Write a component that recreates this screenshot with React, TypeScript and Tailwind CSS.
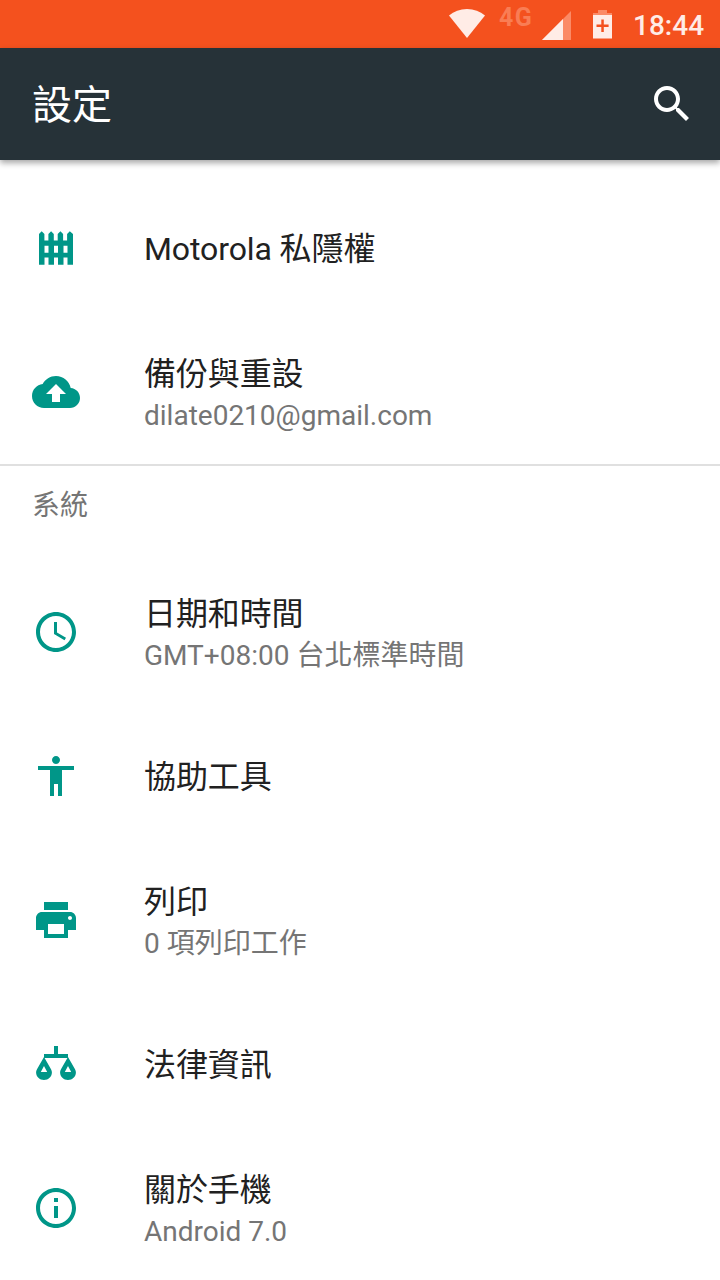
import React from "react";

type SettingItem = {
  title: string;
  summary?: string;
  icon: React.ReactNode;
};

// Iconos de la lista (rejilla de 24, dibujados a 48px)
const FenceIcon = () => (
  <svg viewBox="0 0 48 48" className="w-12 h-12" fill="currentColor">
    <path d="M7 10l2.700-2.700 2.700 2.700v6.500h4V10l2.700-2.700 2.700 2.700v6.500h3.900V10l2.700-2.700 2.700 2.700v6.500h4V10l2.700-2.700L41 10v30.700h-5.500v-7.200h-4v7.200H26v-7.200h-4v7.200h-5.500v-7.200h-4v7.200H7zM12.500 21.800v6.900h4v-6.900zM22 21.800v6.900h4v-6.900zM31.500 21.800v6.900h4v-6.900z" fillRule="evenodd" />
  </svg>
);

const BackupIcon = () => (
  <svg viewBox="0 0 24 24" className="w-12 h-12" fill="currentColor">
    <path d="M19.35 10.04C18.67 6.59 15.64 4 12 4 9.11 4 6.6 5.64 5.35 8.04 2.34 8.36 0 10.91 0 14c0 3.31 2.69 6 6 6h13c2.76 0 5-2.24 5-5 0-2.64-2.05-4.78-4.65-4.96zM14 13v4h-4v-4H7l5-5 5 5h-3z" />
  </svg>
);

const ClockIcon = () => (
  <svg viewBox="0 0 24 24" className="w-12 h-12" fill="currentColor">
    <path d="M11.99 2C6.47 2 2 6.48 2 12s4.47 10 9.99 10C17.52 22 22 17.52 22 12S17.52 2 11.99 2zM12 20c-4.42 0-8-3.58-8-8s3.58-8 8-8 8 3.58 8 8-3.58 8-8 8zm.5-13H11v6l5.25 3.15.75-1.23-4.5-2.67z" />
  </svg>
);

const AccessibilityIcon = () => (
  <svg viewBox="0 0 24 24" className="w-12 h-12" fill="currentColor">
    <path d="M12 2c1.1 0 2 .9 2 2s-.9 2-2 2-2-.9-2-2 .9-2 2-2zm9 7h-6v13h-2v-6h-2v6H9V9H3V7h18v2z" />
  </svg>
);

const PrintIcon = () => (
  <svg viewBox="0 0 24 24" className="w-12 h-12" fill="currentColor">
    <path d="M19 8H5c-1.66 0-3 1.34-3 3v6h4v4h12v-4h4v-6c0-1.66-1.34-3-3-3zm-3 11H8v-5h8v5zm3-7c-.55 0-1-.45-1-1s.45-1 1-1 1 .45 1 1-.45 1-1 1zm-1-9H6v4h12V3z" />
  </svg>
);

const LegalIcon = () => (
  <svg viewBox="0 0 48 48" className="w-12 h-12" fill="currentColor">
    <path d="M22 6h4v8h10v4H12v-4h10z" />
    <path d="M12 17l6.600 11.400c1 1.700 1.300 2.900 1.300 4.100 0 4.200-3.500 7.500-7.900 7.500s-7.900-3.300-7.900-7.500c0-1.200.3-2.400 1.300-4.100zM12 26l-3.200 6h6.400zM36 17l6.600 11.400c1 1.700 1.300 2.900 1.300 4.100 0 4.200-3.500 7.500-7.900 7.500s-7.900-3.300-7.900-7.500c0-1.200.3-2.400 1.300-4.100zM36 26l-3.200 6h6.400z" fillRule="evenodd" />
  </svg>
);

const InfoIcon = () => (
  <svg viewBox="0 0 24 24" className="w-12 h-12" fill="currentColor">
    <path d="M11 17h2v-6h-2v6zm1-15C6.480 2 2 6.480 2 12s4.480 10 10 10 10-4.480 10-10S17.520 2 12 2zm0 18c-4.410 0-8-3.590-8-8s3.590-8 8-8 8 3.590 8 8-3.590 8-8 8zM11 9h2V7h-2v2z" />
  </svg>
);

const personalItems: SettingItem[] = [
  { title: "Motorola 私隱權", icon: <FenceIcon /> },
  { title: "備份與重設", summary: "dilate0210@gmail.com", icon: <BackupIcon /> },
];

const systemItems: SettingItem[] = [
  { title: "日期和時間", summary: "GMT+08:00 台北標準時間", icon: <ClockIcon /> },
  { title: "協助工具", icon: <AccessibilityIcon /> },
  { title: "列印", summary: "0 項列印工作", icon: <PrintIcon /> },
  { title: "法律資訊", icon: <LegalIcon /> },
  { title: "關於手機", summary: "Android 7.0", icon: <InfoIcon /> },
];

const StatusBar = () => (
  <div className="h-12 bg-[#f4511e] flex items-start text-[#ffece6]">
    <svg viewBox="0 0 36 30" className="w-9 h-[30px] ml-[449px] mt-[9px]" fill="currentColor">
      <path d="M0 6.500C5 2.300 11 0 18 0s13 2.300 18 6.500L18 29z" />
    </svg>
    <span className="ml-[14px] mt-[4px] w-[38px] text-[25px] leading-[28px] font-bold tracking-[1.5px] text-[#f97d54]">4G</span>
    <svg viewBox="0 0 30 30" className="w-[30px] h-[30px] ml-[5px] mt-[10px]">
      <path d="M29 1v29H0z" fill="#fb8a66" />
      <path d="M21 9v21H0z" fill="currentColor" />
    </svg>
    <svg viewBox="0 0 20 30" className="w-5 h-[30px] ml-[21px] mt-[9px]">
      <path d="M5 1h9v3h5v3H0V4h5z" fill="#fb8a66" />
      <path d="M0 6h19v23.500H0zM8.300 10.500v5H3.500v2.500h4.800v5h2.500v-5h4.800v-2.500h-4.800v-5z" fill="currentColor" fillRule="evenodd" />
    </svg>
    <span className="ml-[20px] mt-[9px] text-[28px] leading-[34px] font-medium">18:44</span>
  </div>
);

const Row: React.FC<{ item: SettingItem }> = ({ item }) => (
  <div className="h-36 flex items-center px-8">
    <div className="w-12 shrink-0 text-[#009688]">{item.icon}</div>
    <div className="ml-16 pt-[2px]">
      <div className="text-[32px] leading-[44px] tracking-[-0.1px] text-[#212121]">{item.title}</div>
      {item.summary && (
        <div className="mt-px text-[28px] leading-[38px] text-[#757575]">{item.summary}</div>
      )}
    </div>
  </div>
);

const App: React.FC = () => {
  return (
    <div className="w-[720px] h-[1280px] overflow-hidden bg-white whitespace-nowrap font-[Roboto,'Noto_Sans_CJK_TC',sans-serif]">
      <StatusBar />

      <header className="relative h-28 px-8 bg-[#263238] flex items-center justify-between shadow-[0_3px_6px_rgba(0,0,0,0.35)]">
        <h1 className="pt-1 text-[40px] leading-[56px] text-white">設定</h1>
        <svg viewBox="0 0 24 24" className="w-12 h-12 -mr-2" fill="white">
          <path d="M15.500 14h-.79l-.28-.27C15.410 12.590 16 11.110 16 9.500 16 5.910 13.090 3 9.500 3S3 5.910 3 9.500 5.910 16 9.500 16c1.610 0 3.090-.59 4.230-1.570l.27.28v.79l5 4.990L20.490 19l-4.990-5zm-6 0C7.010 14 5 11.990 5 9.500S7.010 5 9.500 5 14 7.010 14 9.500 11.990 14 9.500 14z" />
        </svg>
      </header>

      <main className="pt-4">
        {personalItems.map((item) => (
          <Row key={item.title} item={item} />
        ))}

        {/* Sección del sistema */}
        <div className="h-24 border-t-2 border-[#e0e0e0] px-8 pt-[20px]">
          <h2 className="text-[28px] leading-[40px] text-[#757575]">系統</h2>
        </div>
        {systemItems.map((item) => (
          <Row key={item.title} item={item} />
        ))}
      </main>
    </div>
  );
};

export default App;
